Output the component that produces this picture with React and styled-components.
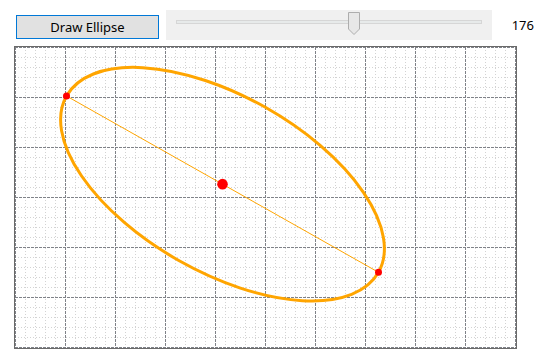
import React from "react";
import styled, { createGlobalStyle } from "styled-components";

const Global = createGlobalStyle`
  html, body { margin: 0; padding: 0; background: #ffffff; }
  body { font-family: "Noto Sans", "Open Sans", sans-serif; }
`;

const Page = styled.div`
  width: 534px;
  height: 362px;
  overflow: hidden;
  display: flex;
  flex-direction: column;
`;

const Toolbar = styled.div`
  display: flex;
  align-items: flex-start;
  padding: 10px 0 0 16px;
  height: 30px;
`;

const Button = styled.button`
  box-sizing: border-box;
  width: 143px;
  height: 24px;
  margin-top: 5px;
  margin-right: 7px;
  padding: 0;
  background: #e1e1e1;
  border: 1px solid #0078d7;
  font-family: "Noto Sans", "Open Sans", sans-serif;
  font-size: 13px;
  color: #000;
  line-height: 20px;
`;

const SliderPanel = styled.div`
  position: relative;
  width: 326px;
  height: 30px;
  background: #f0f0f0;
`;

const Track = styled.div`
  position: absolute;
  left: 10px;
  top: 10px;
  width: 306px;
  height: 4px;
  box-sizing: border-box;
  background: #e7eaea;
  border: 1px solid #d6d6d6;
`;

const Thumb = styled.svg`
  position: absolute;
  top: 2px;
  width: 13px;
  height: 23px;
`;

const Value = styled.div`
  margin-left: 20px;
  height: 30px;
  line-height: 30px;
  font-size: 13px;
  color: #000;
`;

const Canvas = styled.div`
  margin: 6px 0 0 14px;
  width: 503px;
  height: 303px;
  box-sizing: border-box;
  border: 1px solid #6a6a6a;
  background: #ffffff;
`;

const Drawing = styled.svg`
  display: block;
`;

const W = 501;
const H = 301;

function Grid() {
  const lines = [];
  for (let x = 0; x <= 500; x += 10) {
    if (x % 50 !== 0) {
      lines.push(
        <line key={"vx" + x} x1={x + 0.5} y1={0} x2={x + 0.5} y2={H} stroke="#d3d3d3" strokeDasharray="1 2" />
      );
    }
  }
  for (let y = 0; y <= 300; y += 10) {
    if (y % 50 !== 0) {
      lines.push(
        <line key={"hy" + y} x1={0} y1={y + 0.5} x2={W} y2={y + 0.5} stroke="#d3d3d3" strokeDasharray="1 2" />
      );
    }
  }
  for (let x = 0; x <= 500; x += 50) {
    lines.push(
      <line key={"Vx" + x} x1={x + 0.5} y1={0} x2={x + 0.5} y2={H} stroke="#7f8288" strokeDasharray="3 1" />
    );
  }
  for (let y = 0; y <= 300; y += 50) {
    lines.push(
      <line key={"Hy" + y} x1={0} y1={y + 0.5} x2={W} y2={y + 0.5} stroke="#7f8288" strokeDasharray="3 1" />
    );
  }
  return <g shapeRendering="crispEdges">{lines}</g>;
}

export default function App() {
  const value = 176;
  const p1 = { x: 51.5, y: 49 };
  const p2 = { x: 363.5, y: 225.3 };
  const cx = (p1.x + p2.x) / 2;
  const cy = (p1.y + p2.y) / 2;
  const dx = p2.x - p1.x;
  const dy = p2.y - p1.y;
  const rx = Math.sqrt(dx * dx + dy * dy) / 2;
  const ry = value / 2;
  const angle = (Math.atan2(dy, dx) * 180) / Math.PI;
  const thumbLeft = 182;

  return (
    <Page>
      <Global />
      <Toolbar>
        <Button>Draw Ellipse</Button>
        <SliderPanel>
          <Track />
          <Thumb viewBox="0 0 13 23" style={{ left: thumbLeft }}>
            <path d="M0.5 0.5 H11.5 V17 L6 22.5 L0.5 17 Z" fill="#e7e7e7" stroke="#adadad" />
          </Thumb>
        </SliderPanel>
        <Value>{value}</Value>
      </Toolbar>
      <Canvas>
        <Drawing width={W} height={H} viewBox={`0 0 ${W} ${H}`}>
          <Grid />
          <line x1={p1.x} y1={p1.y} x2={p2.x} y2={p2.y} stroke="#ffa500" strokeWidth="1" />
          <ellipse
            cx={cx}
            cy={cy}
            rx={rx}
            ry={ry}
            fill="none"
            stroke="#ffa500"
            strokeWidth="3"
            transform={`rotate(${angle} ${cx} ${cy})`}
          />
          <circle cx={p1.x} cy={p1.y} r="3.5" fill="#ff0000" />
          <circle cx={p2.x} cy={p2.y} r="3.5" fill="#ff0000" />
          <circle cx={cx} cy={cy} r="5.3" fill="#ff0000" />
        </Drawing>
      </Canvas>
    </Page>
  );
}
